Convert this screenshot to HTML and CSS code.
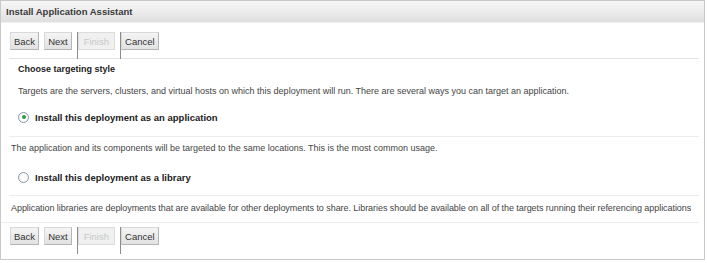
FILE: index.html
```html
<!DOCTYPE html>
<html lang="en">
<head>
    <meta charset="UTF-8">
    <meta name="viewport" content="width=device-width, initial-scale=1.0">
    <title>Install Application Assistant</title>
    <link rel="stylesheet" href="styles.css">
</head>
<body>
    <div class="panel">
        <div class="panel-title">Install Application Assistant</div>

        <div class="toolbar">
            <button class="btn">Back</button>
            <button class="btn">Next</button>
            <span class="sep"></span>
            <button class="btn" disabled>Finish</button>
            <span class="sep"></span>
            <button class="btn">Cancel</button>
        </div>

        <div class="section">
            <div class="heading">Choose targeting style</div>
            <div class="intro">Targets are the servers, clusters, and virtual hosts on which this deployment will run. There are several ways you can target an application.</div>
            <label class="choice">
                <span class="radio checked"></span>
                Install this deployment as an application
            </label>
        </div>

        <div class="help">The application and its components will be targeted to the same locations. This is the most common usage.</div>
        <div class="section">
            <label class="choice second">
                <span class="radio"></span>
                Install this deployment as a library
            </label>
        </div>

        <div class="help last">Application libraries are deployments that are available for other deployments to share. Libraries should be available on all of the targets running their referencing applications</div>

        <div class="toolbar bottom">
            <button class="btn">Back</button>
            <button class="btn">Next</button>
            <span class="sep"></span>
            <button class="btn" disabled>Finish</button>
            <span class="sep"></span>
            <button class="btn">Cancel</button>
        </div>
    </div>
</body>
</html>
```

FILE: styles.css
```css
body {
    margin: 0;
    padding: 0;
    background: #fff;
    font-family: 'Liberation Sans', Arial, sans-serif;
    font-size: 9px;
    color: #333;
}

.panel {
    width: 703px;
    height: 258px;
    border: 1px solid #c9c9c9;
    background: #fff;
}

.panel-title {
    height: 21px;
    line-height: 21px;
    padding-left: 5px;
    font-weight: bold;
    font-size: 9.5px;
    color: #3a3a3a;
    background: linear-gradient(to bottom, #f6f6f6 0%, #ececec 50%, #dedede 100%);
    border-bottom: 1px solid #f0f0f0;
}

.toolbar {
    display: flex;
    align-items: flex-start;
    gap: 5px;
    height: 26px;
    margin: 0 5px 0 8px;
    padding: 9px 0 0 1px;
    border-bottom: 1px solid #e3e3e3;
}

.toolbar.bottom {
    border-bottom: none;
    padding-top: 4px;
}

.btn {
    height: 18px;
    padding: 0 3px;
    font-family: 'Liberation Sans', Arial, sans-serif;
    font-size: 9.5px;
    color: #333;
    background: linear-gradient(to bottom, #f4f4f4, #e2e2e2);
    border: 1px solid #b5b5b5;
    border-top-color: #d8d8d8;
    border-left-color: #d8d8d8;
    cursor: pointer;
}

.btn[disabled] {
    padding: 0 5px;
    color: #c8c8c8;
    background: #f0f0f0;
    border-color: #dcdcdc;
    cursor: default;
}

.sep {
    width: 1px;
    height: 27px;
    margin-right: -5px;
    background: #8c8c8c;
}

.section {
    margin: 0 5px 0 8px;
    border-bottom: 1px solid #ececec;
}

.heading {
    height: 20px;
    line-height: 20px;
    padding-left: 9px;
    font-weight: bold;
    color: #222;
}

.intro {
    height: 20px;
    line-height: 20px;
    margin-top: 2px;
    padding-left: 9px;
    color: #444;
}

.choice {
    display: flex;
    align-items: center;
    gap: 6px;
    height: 20px;
    margin: 6px 0 9px;
    padding-left: 9px;
    font-weight: bold;
    font-size: 9.5px;
    color: #222;
}

.choice.second {
    margin: 7px 0 8px;
}

.radio {
    box-sizing: border-box;
    width: 11px;
    height: 11px;
    border: 1px solid #8a9aa8;
    border-radius: 50%;
    background: radial-gradient(circle, #fff 40%, #e6e8ea 100%);
    position: relative;
}

.radio.checked::after {
    content: "";
    position: absolute;
    left: 2.5px;
    top: 2.5px;
    width: 4px;
    height: 4px;
    border-radius: 50%;
    background: #2d9a3c;
}

.help {
    height: 23px;
    line-height: 23px;
    padding-left: 10px;
    color: #444;
    white-space: nowrap;
}

.help.last {
    margin: 0 5px 0 0;
    height: 26px;
    line-height: 25px;
    letter-spacing: -0.06px;
    border-bottom: 1px solid #ececec;
}
```
